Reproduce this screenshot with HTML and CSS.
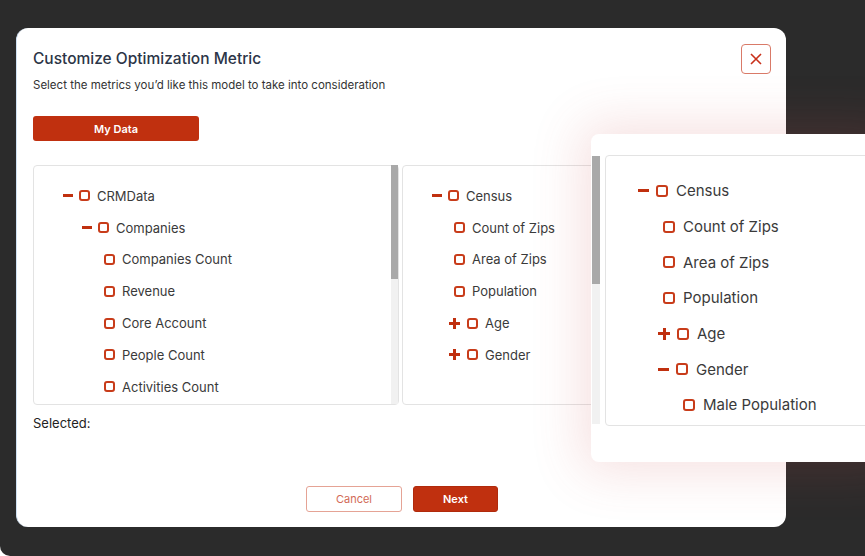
FILE: index.html
```html
<!DOCTYPE html>
<html lang="en">
<head>
    <meta charset="UTF-8"/>
    <title>Customize Optimization Metric</title>
    <link rel="stylesheet" href="styles.css">
</head>
<body>
<div class="frame">
    <div class="modal">
        <div class="modal-head">
            <div>
                <h3 class="title">Customize Optimization Metric</h3>
                <p class="subtitle">Select the metrics you’d like this model to take into consideration</p>
            </div>
            <button class="close-btn" aria-label="Close">
                <svg width="12" height="12" viewBox="0 0 12 12"><path d="M1 1L11 11M11 1L1 11" stroke="#c8301a" stroke-width="1.6" fill="none"/></svg>
            </button>
        </div>

        <button class="tab-btn">My Data</button>

        <div class="panels">
            <div class="panel panel-wide">
                <ul class="tree">
                    <li class="node"><span class="exp minus"></span><span class="cb"></span>CRMData</li>
                    <li class="node d1"><span class="exp minus"></span><span class="cb"></span>Companies</li>
                    <li class="node d2 leaf"><span class="cb"></span>Companies Count</li>
                    <li class="node d2 leaf"><span class="cb"></span>Revenue</li>
                    <li class="node d2 leaf"><span class="cb"></span>Core Account</li>
                    <li class="node d2 leaf"><span class="cb"></span>People Count</li>
                    <li class="node d2 leaf"><span class="cb"></span>Activities Count</li>
                </ul>
                <div class="scroll"><div class="thumb thumb-a"></div></div>
            </div>
            <div class="panel panel-mid">
                <ul class="tree">
                    <li class="node"><span class="exp minus"></span><span class="cb"></span>Census</li>
                    <li class="node d1 leaf"><span class="cb"></span>Count of Zips</li>
                    <li class="node d1 leaf"><span class="cb"></span>Area of Zips</li>
                    <li class="node d1 leaf"><span class="cb"></span>Population</li>
                    <li class="node d1"><span class="exp plus"></span><span class="cb"></span>Age</li>
                    <li class="node d1"><span class="exp plus"></span><span class="cb"></span>Gender</li>
                </ul>
                <div class="scroll"><div class="thumb thumb-b"></div></div>
            </div>
            <div class="panel panel-rest"></div>
        </div>

        <div class="selected">Selected:</div>

        <div class="modal-foot">
            <button class="btn btn-outline">Cancel</button>
            <button class="btn btn-fill">Next</button>
        </div>
    </div>

    <!-- magnified view of the census tree -->
    <div class="zoom-card">
        <div class="scroll zoom-scroll"><div class="thumb thumb-c"></div></div>
        <div class="panel zoom-panel">
            <ul class="tree big">
                <li class="node"><span class="exp minus"></span><span class="cb"></span>Census</li>
                <li class="node d1 leaf"><span class="cb"></span>Count of Zips</li>
                <li class="node d1 leaf"><span class="cb"></span>Area of Zips</li>
                <li class="node d1 leaf"><span class="cb"></span>Population</li>
                <li class="node d1"><span class="exp plus"></span><span class="cb"></span>Age</li>
                <li class="node d1"><span class="exp minus"></span><span class="cb"></span>Gender</li>
                <li class="node d2 leaf"><span class="cb"></span>Male Population</li>
            </ul>
        </div>
    </div>
</div>
</body>
</html>
```

FILE: styles.css
```css
* {
    box-sizing: border-box;
}

body {
    margin: 0;
    background: #fff;
    font-family: Inter, "Noto Sans", sans-serif;
    color: #3a3a3a;
}

.frame {
    position: relative;
    width: 865px;
    height: 556px;
    overflow: hidden;
    background: #2b2b2b;
    border-radius: 0 0 0 10px;
    padding: 28px 0 0 16px;
}

.modal {
    width: 770px;
    height: 499px;
    background: #fff;
    border-radius: 12px;
    border-left: 1px solid #cfe1f3;
    padding: 16px 15px 15px 16px;
    display: flex;
    flex-direction: column;
}

.modal-head {
    display: flex;
    justify-content: space-between;
    align-items: flex-start;
}

.title {
    margin: 5px 0 0;
    font-size: 15.5px;
    line-height: 20px;
    font-weight: 500;
    color: #2c3547;
}

.subtitle {
    margin: 9px 0 0;
    font-size: 11.5px;
    line-height: 14px;
    color: #333;
}

.close-btn {
    width: 30px;
    height: 30px;
    border: 1px solid #d97a68;
    border-radius: 4px;
    background: #fff;
    display: flex;
    align-items: center;
    justify-content: center;
    padding: 0;
}

.tab-btn {
    margin-top: 24px;
    width: 166px;
    height: 25px;
    border: none;
    border-radius: 3px;
    background: #c0300f;
    color: #fff;
    font-family: inherit;
    font-size: 11px;
    font-weight: 600;
}

.panels {
    margin-top: 24px;
    display: flex;
    gap: 3px;
    height: 240px;
}

.panel {
    position: relative;
    border: 1px solid #e3e3e3;
    border-radius: 4px;
    background: #fff;
}

.panel-wide {
    width: 366px;
}

.panel-mid {
    width: 198px;
}

.panel-rest {
    flex: 1;
}

.scroll {
    position: absolute;
    top: -1px;
    right: 0;
    bottom: 0;
    width: 7px;
    background: #f1f1f1;
}

.thumb {
    background: #a9a9a9;
    width: 100%;
}

.thumb-a {
    height: 114px;
}

.thumb-b {
    height: 120px;
}

.tree {
    list-style: none;
    margin: 0;
    padding: 14px 0 0 29px;
}

.node {
    display: flex;
    align-items: center;
    height: 31.8px;
    font-size: 13px;
    white-space: nowrap;
}

.d1 {
    padding-left: 19px;
}

.d2 {
    padding-left: 38px;
}

.leaf {
    margin-left: 3px;
}

.panel-mid .d1 {
    padding-left: 17px;
}

.panel-mid .d1.leaf {
    margin-left: 5px;
}

.exp {
    position: relative;
    width: 10px;
    height: 10px;
    margin-right: 6px;
}

.exp::before,
.exp::after {
    content: "";
    position: absolute;
    background: #c0300f;
}

.exp::before {
    left: 0;
    top: 3.5px;
    width: 100%;
    height: 3px;
}

.plus {
    width: 11px;
    height: 11px;
    margin-right: 7px;
}

.plus::before {
    top: 4px;
}

.plus::after {
    left: 4px;
    top: 0;
    width: 3px;
    height: 100%;
}

.cb {
    width: 11px;
    height: 11px;
    border: 2px solid #c83c1a;
    border-radius: 3px;
    margin-right: 7px;
}

.selected {
    margin-top: 10px;
    font-size: 13px;
    line-height: 16px;
    color: #222;
}

.modal-foot {
    margin-top: auto;
    display: flex;
    justify-content: center;
    gap: 11px;
}

.btn {
    height: 26px;
    border-radius: 3px;
    font-family: inherit;
    font-size: 11px;
}

.btn-outline {
    width: 96px;
    border: 1px solid #e5a395;
    background: #fff;
    color: #d26a56;
}

.btn-fill {
    width: 85px;
    border: 1px solid #b02a0c;
    background: #c0300f;
    color: #fff;
    font-weight: 600;
}

/* magnified card */
.zoom-card {
    position: absolute;
    left: 591px;
    top: 134px;
    width: 300px;
    height: 328px;
    background: #fff;
    border-radius: 8px;
    box-shadow: 0 0 50px 10px rgba(200, 80, 80, 0.17);
    padding: 22px 0 0 1px;
    display: flex;
    gap: 5px;
}

.zoom-scroll {
    position: static;
    width: 8px;
    height: 268px;
}

.thumb-c {
    height: 128px;
}

.zoom-panel {
    flex: 1;
    height: 271px;
    margin-top: -1px;
}

.big {
    padding: 17px 0 0 32px;
}

.big .node {
    height: 35.7px;
    font-size: 15px;
}

.big .d1 {
    padding-left: 20px;
}

.big .d2 {
    padding-left: 40px;
}

.big .leaf {
    margin-left: 5px;
}

.big .exp {
    width: 11px;
    height: 11px;
    margin-right: 7px;
}

.big .exp::before {
    top: 4px;
}

.big .plus {
    width: 12px;
    height: 12px;
    margin-right: 7px;
}

.big .plus::before {
    top: 4.5px;
}

.big .plus::after {
    left: 4.5px;
}

.big .cb {
    width: 12px;
    height: 12px;
    margin-right: 8px;
}
```
